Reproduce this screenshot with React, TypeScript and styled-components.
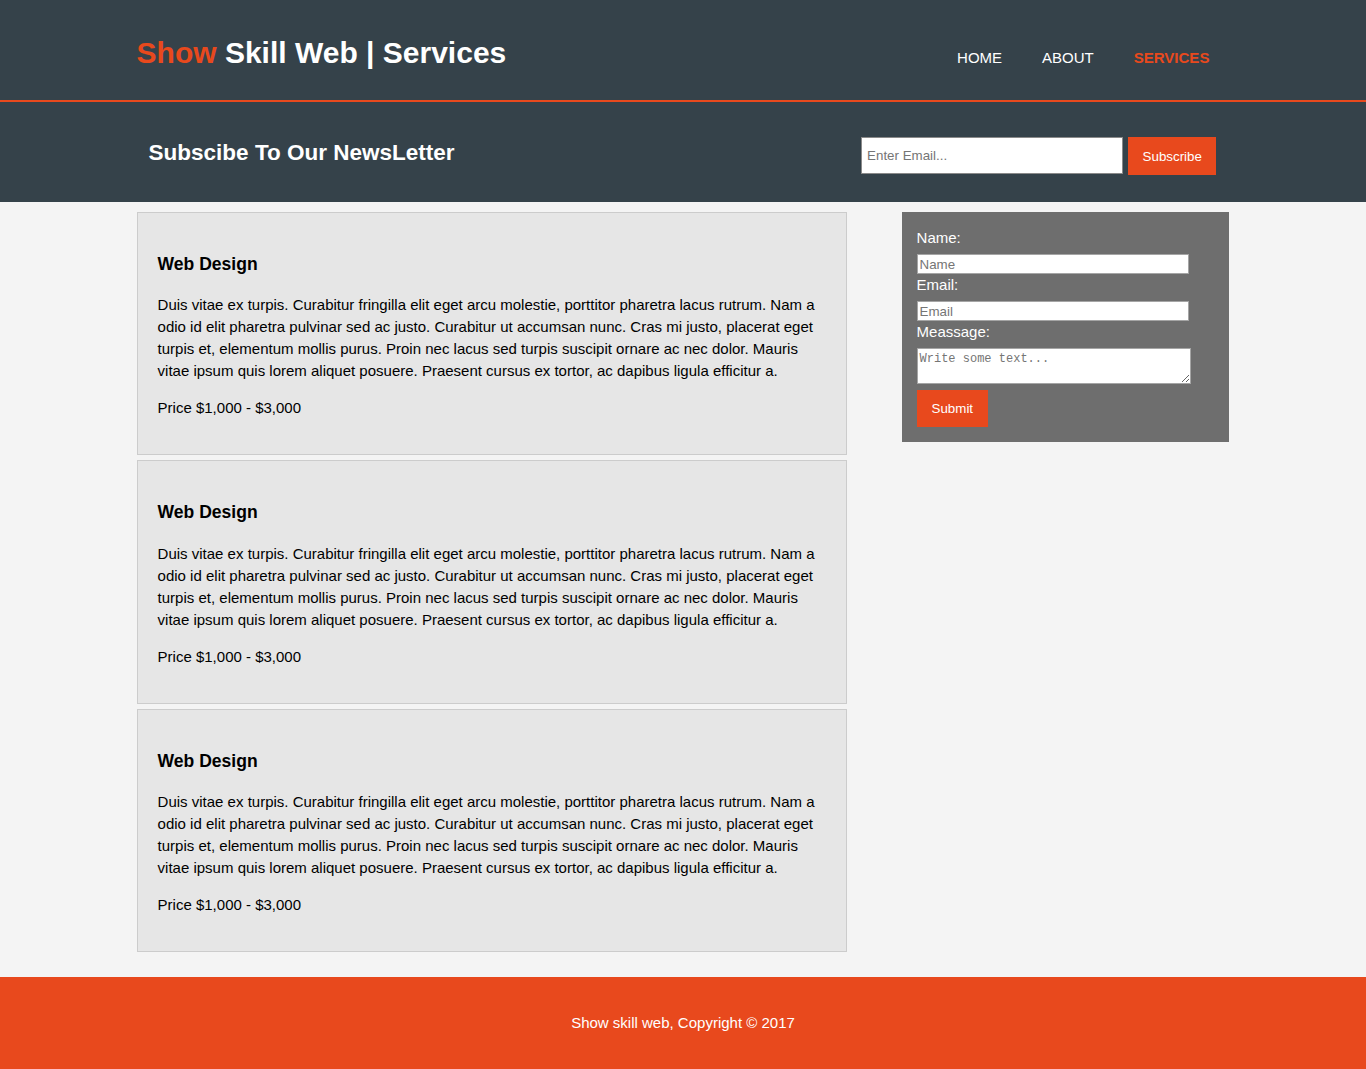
import React from "react";
import styled, { createGlobalStyle } from "styled-components";

const GlobalStyle = createGlobalStyle`
  html, body {
    margin: 0;
    padding: 0;
  }
  body {
    font-family: "Liberation Sans", Arial, Helvetica, sans-serif;
    font-size: 15px;
    line-height: 1.5;
    background: #f4f4f4;
    color: #000;
  }
`;

const Container = styled.div`
  width: 80%;
  margin: 0 auto;
`;

const Header = styled.header`
  background: #35424a;
  height: 100px;
  border-bottom: 2px solid #e8491d;
  color: #fff;
`;

const HeaderInner = styled(Container)`
  display: flex;
  justify-content: space-between;
  align-items: flex-start;
`;

const Logo = styled.h1`
  margin: 36px 0 0;
  font-size: 30px;
  line-height: 34px;
  font-weight: bold;
  color: #fff;
`;

const Highlight = styled.span`
  color: #e8491d;
`;

const NavList = styled.ul`
  display: flex;
  list-style: none;
  margin: 47px 0 0;
  padding: 0;
`;

const NavItem = styled.li<{ $active?: boolean }>`
  padding: 0 20px;
  font-size: 15px;
  line-height: 22px;
  text-transform: uppercase;
  color: ${(p) => (p.$active ? "#e8491d" : "#fff")};
  font-weight: ${(p) => (p.$active ? "bold" : "normal")};
`;

const Newsletter = styled.section`
  background: #35424a;
  height: 100px;
  color: #fff;
`;

const NewsInner = styled(Container)`
  display: flex;
  justify-content: space-between;
  align-items: flex-start;
  padding: 0 13px 0 12px;
  box-sizing: border-box;
`;

const NewsTitle = styled.h1`
  margin: 38px 0 0;
  font-size: 22.5px;
  line-height: 26px;
  font-weight: bold;
`;

const NewsForm = styled.form`
  display: flex;
  align-items: flex-start;
  gap: 5px;
  margin-top: 35px;
`;

const EmailInput = styled.input`
  box-sizing: border-box;
  width: 262px;
  height: 37px;
  padding: 4px 5px;
  border: 1px solid #8a8a8a;
  font-family: "Liberation Sans", Arial, sans-serif;
  font-size: 13.33px;
  color: #333;
  background: #fff;
  &::placeholder {
    color: #757575;
  }
`;

const Button = styled.button<{ $h: number; $px: number }>`
  height: ${(p) => p.$h}px;
  padding: 0 ${(p) => p.$px}px;
  border: 0;
  background: #e8491d;
  color: #fff;
  font-family: "Liberation Sans", Arial, sans-serif;
  font-size: 13.33px;
  cursor: pointer;
`;

const Main = styled(Container)`
  display: flex;
  justify-content: space-between;
  align-items: flex-start;
  margin-top: 10px;
`;

const Services = styled.ul`
  width: 65%;
  list-style: none;
  margin: 0;
  padding: 0 0 5px;
  display: flex;
  flex-direction: column;
  gap: 5px;
`;

const Card = styled.li`
  display: block;
  padding: 21px 20px 20px;
  border: 1px solid #cccccc;
  background: #e6e6e6;
`;

const CardTitle = styled.h3`
  font-size: 17.55px;
  line-height: 23px;
  margin: 18.72px 0;
  font-weight: bold;
`;

const CardText = styled.p`
  margin: 15px 0;
  line-height: 22px;
`;

const Sidebar = styled.aside`
  width: 30%;
  box-sizing: border-box;
  background: #6e6e6e;
  color: #fff;
  padding: 15px 15px 15px;
`;

const QuoteForm = styled.form`
  display: flex;
  flex-direction: column;
  align-items: flex-start;
`;

const Label = styled.label`
  display: block;
  line-height: 22px;
  font-size: 15px;
`;

const FieldInput = styled.input`
  box-sizing: border-box;
  width: calc(90% + 4px);
  height: 20px;
  margin: 5px 0 0;
  padding: 1px 2px;
  border: 1px solid #a5a5a5;
  background: #fff;
  font-family: "Liberation Sans", Arial, sans-serif;
  font-size: 13.33px;
  &::placeholder {
    color: #757575;
  }
`;

const FieldArea = styled.textarea`
  box-sizing: border-box;
  width: calc(90% + 6px);
  height: 36px;
  margin: 5px 0 0;
  padding: 3px 2px 2px;
  border: 1px solid #a5a5a5;
  background: #fff;
  font-family: "Liberation Mono", "Courier New", monospace;
  font-size: 12px;
  &::placeholder {
    color: #757575;
  }
`;

const SubmitWrap = styled.div`
  margin-top: 6px;
`;

const Footer = styled.footer`
  margin-top: 20px;
  padding: 20px;
  background: #e8491d;
  color: #fff;
  text-align: center;
`;

const FooterText = styled.p`
  margin: 15px 0;
  line-height: 22.5px;
`;

const lorem =
  "Duis vitae ex turpis. Curabitur fringilla elit eget arcu molestie, porttitor pharetra lacus rutrum. Nam a odio id elit pharetra pulvinar sed ac justo. Curabitur ut accumsan nunc. Cras mi justo, placerat eget turpis et, elementum mollis purus. Proin nec lacus sed turpis suscipit ornare ac nec dolor. Mauris vitae ipsum quis lorem aliquet posuere. Praesent cursus ex tortor, ac dapibus ligula efficitur a.";

const services = [1, 2, 3];

export default function App() {
  return (
    <>
      <GlobalStyle />
      <Header>
        <HeaderInner>
          <Logo>
            <Highlight>Show</Highlight> Skill Web | Services
          </Logo>
          <nav>
            <NavList>
              <NavItem>Home</NavItem>
              <NavItem>About</NavItem>
              <NavItem $active>Services</NavItem>
            </NavList>
          </nav>
        </HeaderInner>
      </Header>

      <Newsletter>
        <NewsInner>
          <NewsTitle>Subscibe To Our NewsLetter</NewsTitle>
          <NewsForm onSubmit={(e) => e.preventDefault()}>
            <EmailInput type="email" placeholder="Enter Email..." />
            <Button $h={38} $px={14.5} type="submit">
              Subscribe
            </Button>
          </NewsForm>
        </NewsInner>
      </Newsletter>

      <Main>
        <Services>
          {services.map((i) => (
            <Card key={i}>
              <CardTitle>Web Design</CardTitle>
              <CardText>{lorem}</CardText>
              <CardText>Price $1,000 - $3,000</CardText>
            </Card>
          ))}
        </Services>
        <Sidebar>
          <QuoteForm onSubmit={(e) => e.preventDefault()}>
            <Label>Name:</Label>
            <FieldInput type="text" placeholder="Name" />
            <Label>Email:</Label>
            <FieldInput type="email" placeholder="Email" />
            <Label>Meassage:</Label>
            <FieldArea placeholder="Write some text..." />
            <SubmitWrap>
              <Button $h={37} $px={15} type="submit">
                Submit
              </Button>
            </SubmitWrap>
          </QuoteForm>
        </Sidebar>
      </Main>

      <Footer>
        <FooterText>Show skill web, Copyright &copy; 2017</FooterText>
      </Footer>
    </>
  );
}
